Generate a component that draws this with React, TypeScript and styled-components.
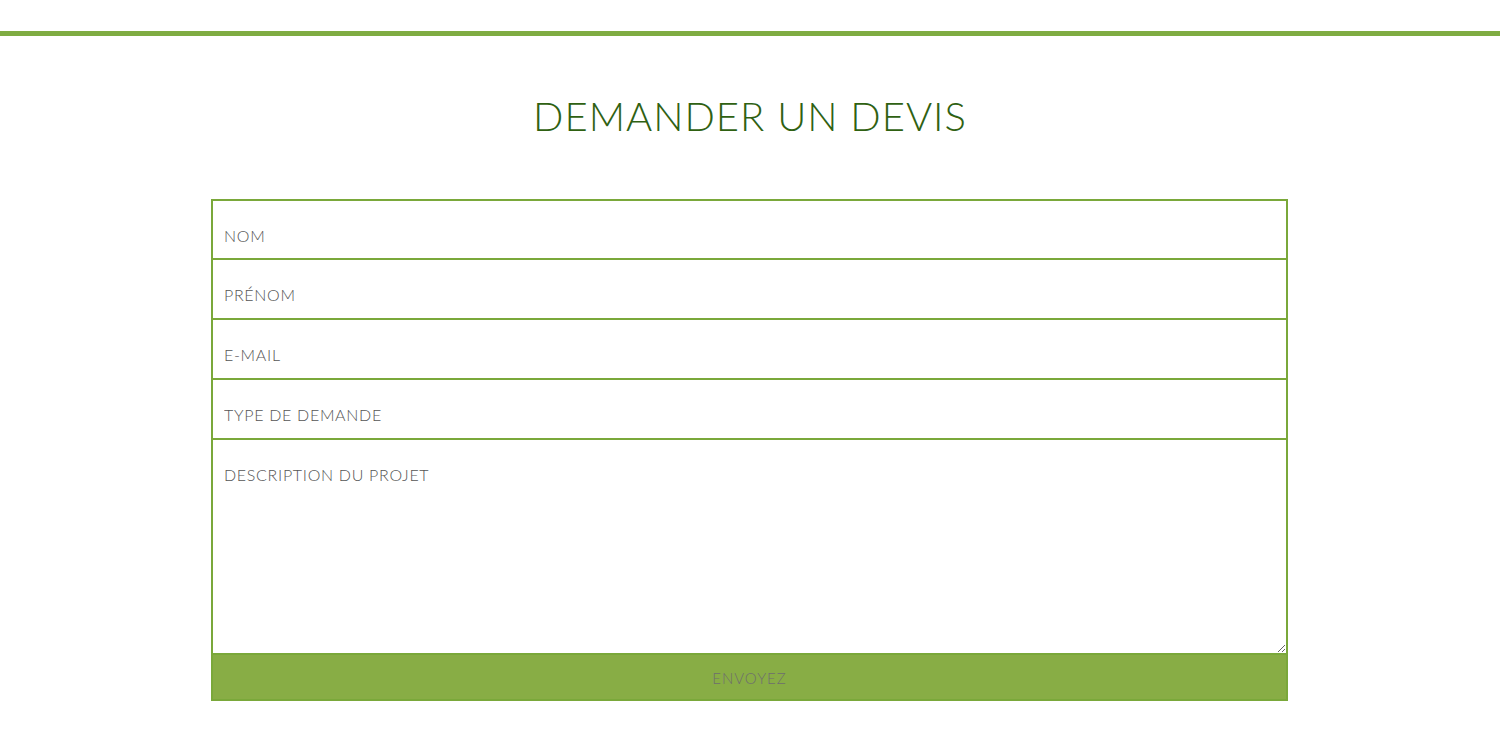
import React from "react";
import styled, { createGlobalStyle } from "styled-components";

const Global = createGlobalStyle`
  html, body { margin: 0; padding: 0; background: #fff; }
  body { font-family: "Lato", "Liberation Sans", sans-serif; }
  * { box-sizing: border-box; }
`;

const TopBar = styled.div`
  margin-top: 31px;
  height: 5px;
  background: #7fac42;
`;

const Title = styled.h1`
  margin: 56px 0 0;
  text-align: center;
  font-family: "Lato", sans-serif;
  font-weight: 300;
  font-size: 40px;
  line-height: 48px;
  letter-spacing: 1px;
  color: #2f6112;
  text-transform: uppercase;
`;

const Form = styled.form`
  width: 1077px;
  margin: 59px 0 0 calc(50% - 539px);
  display: flex;
  flex-direction: column;
`;

const fieldBase = `
  width: 100%;
  border: 2px solid #7aa83a;
  border-top: none;
  padding: 0 11px;
  font-family: "Lato", sans-serif;
  font-weight: 300;
  font-size: 16px;
  letter-spacing: 0.7px;
  color: #555;
  background: #fff;
  outline: none;
  &::placeholder { color: #555555; text-transform: uppercase; }
`;

const Input = styled.input<{ $first?: boolean }>`
  ${fieldBase}
  height: ${(p) => (p.$first ? "61px" : "60px")};
  padding-top: ${(p) => (p.$first ? "11px" : "10px")};
  border-top: ${(p) => (p.$first ? "2px solid #7aa83a" : "none")};
`;

const TextArea = styled.textarea`
  ${fieldBase}
  height: 215px;
  padding-top: 25px;
  resize: both;
  display: block;
`;

const Button = styled.button`
  height: 46px;
  border: none;
  border-left: 2px solid #7aa83a;
  border-right: 2px solid #7aa83a;
  border-bottom: 2px solid #7aa83a;
  background: #88ad45;
  font-family: "Lato", sans-serif;
  font-weight: 300;
  font-size: 15px;
  letter-spacing: 1px;
  color: #6e6e6e;
  text-transform: uppercase;
  padding-top: 2px;
  cursor: pointer;
`;

export default function App() {
  return (
    <>
      <Global />
      <TopBar />
      <Title>Demander un devis</Title>
      <Form onSubmit={(e) => e.preventDefault()}>
        <Input $first placeholder="Nom" />
        <Input placeholder="Prénom" />
        <Input placeholder="E-mail" />
        <Input placeholder="Type de demande" />
        <TextArea placeholder="Description du projet" />
        <Button type="submit">Envoyez</Button>
      </Form>
    </>
  );
}
